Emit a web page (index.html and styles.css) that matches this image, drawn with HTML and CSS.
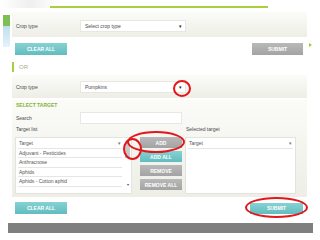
FILE: index.html
```html
<!DOCTYPE html>
<html lang="en">
<head>
  <meta charset="UTF-8">
  <title>Select target</title>
  <meta name="viewport" content="width=device-width, initial-scale=1">
  <link rel="stylesheet" href="styles.css">
</head>
<body>
  <div class="slide">
    <div class="edge-deco"></div>
    <div class="topbar"><span class="topline"></span></div>

    <main class="form">
      <!-- crop type, first form -->
      <div class="panel crop-panel first">
        <span class="field-label">Crop type</span>
        <div class="select"><span>Select crop type</span><i class="caret">&#9662;</i></div>
      </div>
      <div class="actions">
        <button class="btn teal wide">CLEAR ALL</button>
        <button class="btn grey submit">SUBMIT</button>
      </div>

      <div class="or">OR</div>

      <!-- crop type, second form -->
      <div class="panel crop-panel second">
        <span class="field-label">Crop type</span>
        <div class="select"><span>Pumpkins</span><i class="caret">&#9662;</i></div>
      </div>

      <div class="panel target-panel">
        <h3>SELECT TARGET</h3>
        <div class="search-row">
          <span class="field-label">Search</span>
          <div class="input"></div>
        </div>
        <div class="lists">
          <div class="list-col left">
            <span class="list-label">Target list</span>
            <div class="listbox">
              <div class="list-rows">
                <div class="list-row head">Target <i>&#9662;</i></div>
                <div class="list-row">Adjuvant - Pesticides</div>
                <div class="list-row">Anthracnose</div>
                <div class="list-row">Aphids</div>
                <div class="list-row">Aphids - Cotton aphid</div>
              </div>
              <div class="scrollbar">
                <span class="thumb"></span>
                <i class="down">&#9662;</i>
              </div>
            </div>
          </div>
          <div class="move-btns">
            <button class="btn grey">ADD</button>
            <button class="btn teal">ADD ALL</button>
            <button class="btn grey">REMOVE</button>
            <button class="btn grey">REMOVE ALL</button>
          </div>
          <div class="list-col right">
            <span class="list-label">Selected target</span>
            <div class="listbox">
              <div class="list-rows">
                <div class="list-row head">Target <i>&#9662;</i></div>
              </div>
            </div>
          </div>
        </div>
      </div>

      <div class="actions bottom">
        <button class="btn teal wide">CLEAR ALL</button>
        <button class="btn teal submit-lg">SUBMIT</button>
      </div>
    </main>

    <div class="footer-bar"></div>

    <!-- hand-drawn annotations -->
    <span class="pointer"></span>
    <span class="mark mark-caret"></span>
    <span class="mark mark-add"></span>
    <span class="mark mark-scroll"></span>
    <span class="mark mark-submit"></span>
  </div>
</body>
</html>
```

FILE: styles.css
```css
* { box-sizing: border-box; }
body { margin: 0; background: #fff; font-family: "Liberation Sans", Arial, sans-serif; font-size: 5px; color: #4a4a4a; }
.slide { position: relative; width: 320px; height: 240px; overflow: hidden; }

/* slide decoration */
.edge-deco {
  position: absolute; left: 3px; top: 15px; width: 7px; height: 32px;
  background: linear-gradient(#7dbf55 0, #7dbf55 35%, #bfe0f0 36%, #e6f2fa 100%);
}
.topbar { height: 8px; padding-top: 6px; background: linear-gradient(90deg, #fff 0, #efefef 30px, #fff 60px); }
.topline { display: block; margin-left: 50px; width: 218px; height: 2px; background: #a6d03e; }

/* form */
.form { margin: 4px 0 0 12px; width: 295px; }
.panel { background: linear-gradient(#fbfbf8, #eeeee7); }
.crop-panel { display: flex; align-items: center; padding-left: 4px; }
.crop-panel.first { height: 25px; padding-top: 3px; }
.crop-panel.second { height: 23px; margin-top: 3px; padding-top: 1px; }
.field-label { width: 64px; }
.select {
  display: flex; align-items: center; justify-content: space-between;
  width: 106px; height: 12px; padding: 0 3px 0 4px;
  background: #fff; border: 1px solid #e8e8e2;
}
.caret { font-style: normal; font-size: 5px; color: #222; }

.actions { display: flex; justify-content: space-between; align-items: center; margin-top: 6px; padding: 0 4px 0 3px; }
.actions.bottom { margin-top: 5px; padding-right: 4px; }
.btn {
  border: none; padding: 0; height: 12px; color: #fff;
  font-family: "Liberation Sans", Arial, sans-serif; font-size: 5px; font-weight: bold;
}
.btn.teal { background: linear-gradient(#86d2d3, #62bcbf); }
.btn.grey { background: linear-gradient(#b9b9b9, #a3a3a3); }
.btn.wide { width: 52px; }
.btn.submit { width: 51px; }
.btn.submit-lg { width: 53px; height: 11px; }

.or { display: flex; align-items: center; height: 10px; margin-top: 7px; padding-left: 5px; border-left: 2px solid #a6d03e; color: #a2b585; font-size: 6px; }

/* target selection */
.target-panel { margin-top: 2px; height: 97px; padding: 2px 0 0 3px; }
.target-panel h3 { margin: 0; height: 7px; line-height: 7px; padding-left: 1px; font-size: 5px; color: #84b43a; }
.search-row { display: flex; align-items: center; margin-top: 2px; padding-left: 1px; height: 13px; }
.input { width: 102px; height: 12px; background: #fff; border: 1px solid #e8e8e2; }

.lists { display: flex; margin-top: 2px; }
.list-col { display: flex; flex-direction: column; }
.list-label { height: 7px; line-height: 7px; margin-bottom: 4px; padding-left: 1px; }
.listbox { display: flex; height: 57px; background: #fff; border: 1px solid #e4e4de; padding-top: 1px; }
.list-col.left .listbox { width: 117px; }
.list-col.right { margin-left: 3px; }
.list-col.right .listbox { width: 111px; }
.list-rows { flex: 1; padding: 0 2px 0 2px; }
.list-row { height: 9.5px; line-height: 9px; padding-left: 1px; border-bottom: 1px solid #e6e6e6; color: #555; }
.list-row.head { display: flex; justify-content: space-between; }
.list-row i { font-style: normal; color: #777; padding-right: 1px; }
.scrollbar { width: 7px; display: flex; flex-direction: column; justify-content: space-between; align-items: center; padding: 4px 0 6px; }
.thumb { width: 5px; height: 15px; background: #c8c8c8; }
.scrollbar .down { font-style: normal; color: #555; font-size: 4px; }

.move-btns { display: flex; flex-direction: column; gap: 3px; margin: 11px 0 0 8px; }
.move-btns .btn { width: 42px; height: 11px; }

.footer-bar { margin: 9px 0 0 8px; width: 305px; height: 10px; background: #7f7f7f; }

/* annotations drawn over the screenshot */
.pointer { position: absolute; left: 309px; top: 43px; width: 0; height: 0; border-left: 3px solid #9acb3c; border-top: 2px solid transparent; border-bottom: 2px solid transparent; }
.mark { position: absolute; border: 2px solid #e2171b; border-radius: 50%; }
.mark-caret { left: 173px; top: 80px; width: 18px; height: 17px; }
.mark-add { left: 127px; top: 131px; width: 58px; height: 22px; }
.mark-scroll { left: 123px; top: 138px; width: 19px; height: 22px; }
.mark-submit { left: 245px; top: 197px; width: 63px; height: 21px; }
```
